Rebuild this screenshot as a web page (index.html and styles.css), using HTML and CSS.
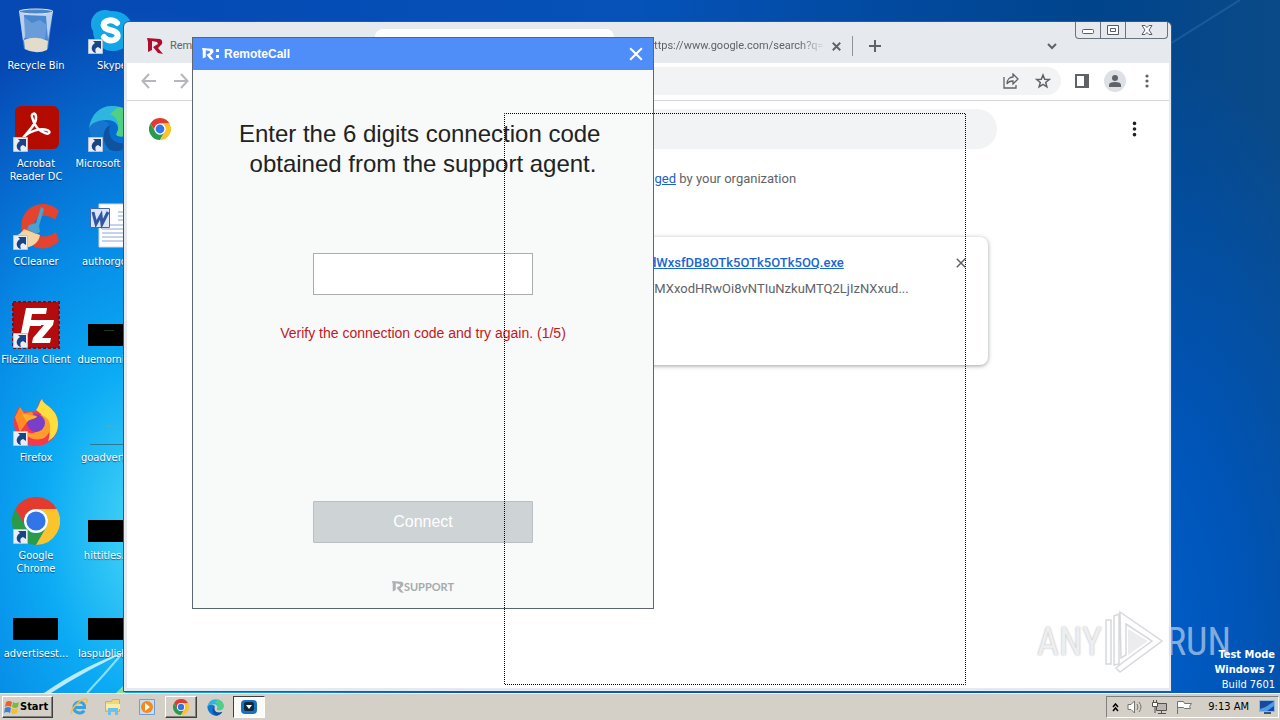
FILE: index.html
```html
<!DOCTYPE html>
<html lang="en">
<head>
<meta charset="utf-8">
<title>RemoteCall</title>
<link rel="stylesheet" href="styles.css">
</head>
<body>
<svg class="defs" aria-hidden="true">
  <symbol id="chrome" viewBox="0 0 48 48">
    <path fill="#e33b2e" d="M24 12H44.8A24 24 0 0 0 3.2 12L13.6 30A12 12 0 0 1 24 12Z"/>
    <path fill="#2a9a4b" d="M34.4 30 24 48A24 24 0 0 1 3.2 12L13.6 30A12 12 0 0 0 34.4 30Z"/>
    <path fill="#fcc42c" d="M24 12H44.8A24 24 0 0 1 24 48L34.4 30A12 12 0 0 0 24 12Z"/>
    <circle cx="24" cy="24" r="12" fill="#fff"/><circle cx="24" cy="24" r="9.6" fill="#3275e8"/>
  </symbol>
  <symbol id="edge" viewBox="0 0 48 48">
    <path fill="#1476cf" d="M1 22C2 39 15 48 27 47c8-1 14-6 16-11-7 5-17 4-22-3-3-5-2-10 1-13C16 13 4 14 1 22Z"/>
    <path fill="#2fb6e0" d="M1 23C3 8 14 0 25 1c13 0 23 9 22 20-1 8-8 12-17 10-3-1-1-3 0-6 1-6-4-10-11-10C10 15 3 18 1 23Z"/>
    <path fill="#4fd083" d="M30 2c11 2 18 10 17 19-1 8-8 12-17 10-3-1-1-3 0-6 2-8-3-14-8-16Z"/>
    <path fill="#0f529e" d="M22 20c-8 4-9 18 0 25 8 4 18-2 21-9-9 5-26 2-21-16Z"/>
  </symbol>
  <symbol id="arrow" viewBox="0 0 15 15">
    <path fill="#e9eef5" stroke="#b4c3d6" d="M.5.5h14v14H.5z"/>
    <path fill="#1b4486" d="M5 2h8v8l-3-2c-3 1-3 3-2 6-5-1-6-7-1-10Z"/>
  </symbol>
  <symbol id="rmark" viewBox="0 0 16 16">
    <path d="M0 0 13 1q3 1 2 5l-4 4 5 6-5-1-5-6 5-3-1-2-5-1v9l-4 2V4Z"/>
  </symbol>
  <symbol id="cross" viewBox="0 0 12 12"><path fill="none" stroke="currentColor" d="m1 1 10 10M11 1 1 11"/></symbol>
  <symbol id="kebab" viewBox="0 0 4 16"><circle cx="2" cy="3" r="1.6"/><circle cx="2" cy="8" r="1.6"/><circle cx="2" cy="13" r="1.6"/></symbol>
</svg>

<main class="desktop">
  <svg class="rays" width="130" height="100" viewBox="0 0 130 100" aria-hidden="true">
    <path fill="#d9f7ff" opacity=".85" d="M44 100Q84 72 130 57 90 75 51 100Z"/>
    <path fill="none" stroke="#a9ecff" stroke-width="2" opacity=".8" d="M87 100Q104 82 120 63"/>
    <path fill="#7fe0a0" d="m116 100 9-9v9z"/>
  </svg>
  <svg class="sheen" width="110" height="60" viewBox="0 0 110 60" aria-hidden="true"><path stroke="#4d86bd" stroke-width="2" opacity=".3" d="M0 44 70 0"/></svg>

  <div class="icons">
    <div class="shortcut">
      <svg viewBox="0 0 48 48"><path fill="#5f9ddd" fill-opacity=".75" d="m7 4 5 38q12 6 24 0l5-38Z"/><path fill="#dfeaf5" fill-opacity=".75" d="m7 4 4 30 3-6-2-20 22 1 2 24 5-29Z"/><path fill="#6d9fd8" fill-opacity=".9" d="m12 10 8 6 8-3 7 5-2 14-20-1Z"/><path fill="#e2ddcb" d="M12 33q12-5 24 1l-1 9q-11 5-22-1Z"/><ellipse cx="24" cy="4.500" rx="17" ry="2.500" fill="#4f86c6" stroke="#dce6ee"/></svg>
      <span>Recycle Bin</span>
    </div>
    <div class="shortcut">
      <svg viewBox="0 0 48 48"><rect x="3" y="3" width="28" height="28" rx="14" fill="#18a6e6"/><circle cx="25" cy="24" r="20" fill="#12a5e8"/><path fill="none" stroke="#fff" stroke-width="6" stroke-linecap="round" d="M29 16q-4-4-10-2c-6 3-3 8 3 9 10 2 9 8 4 10q-6 2-10-3"/><use href="#arrow" y="32" width="15" height="15"/></svg>
      <span>Skype</span>
    </div>
    <div class="shortcut">
      <svg viewBox="0 0 48 48"><rect x="3" y="1" width="44" height="43" rx="6" fill="#b30b00"/><path fill="none" stroke="#fff" stroke-width="2.500" d="M11 33c5-7 14-14 13-21 0-5-5-4-4 0 2 8 7 14 13 16 5 2 6-2 2-3-7-2-18 1-24 8Z"/><use href="#arrow" y="32" width="15" height="15" x="1"/></svg>
      <span>Acrobat Reader DC</span>
    </div>
    <div class="shortcut">
      <svg viewBox="0 0 48 48"><use href="#edge" width="48" height="48"/><use href="#arrow" y="32" width="15" height="15"/></svg>
      <span class="line">Microsoft Edge</span>
    </div>
    <div class="shortcut">
      <svg viewBox="0 0 48 48"><path fill="#e4432f" d="M47 8C36-4 15 0 10 17 5 38 29 56 47 38l-3-9c-12 9-23 3-22-7 1-9 12-13 21-5Z"/><path fill="#f1d5a4" d="m12 26 16 6c-1 8-9 13-17 13L1 33c5 0 8-3 11-7Z"/><path fill="#49a2d2" d="m29 4 3 2-5 17 1 6-4 2-9-5 2-4 7-2Z"/><use href="#arrow" y="32" width="15" height="15" x="1"/></svg>
      <span>CCleaner</span>
    </div>
    <div class="shortcut">
      <svg viewBox="0 0 48 48"><path fill="#fff" stroke="#ccd6e8" d="M11 1h36v43H11z"/><path stroke="#8da5d6" d="M30 9h14M30 13h14M30 17h14M14 22h32M14 26h32M14 30h32M14 34h32M14 38h32"/><path fill="#dce6f8" stroke="#4068b4" d="M2.500 5.500h19v19h-19z"/><path fill="none" stroke="#2f57a6" stroke-width="3" d="m5 9 3 12 5-9 1 9 6-12"/></svg>
      <span>authorgoo...</span>
    </div>
    <div class="shortcut">
      <svg viewBox="0 0 48 48"><path fill="#b40b0f" stroke="#8a0a10" stroke-width="2" stroke-dasharray="3 2" d="M1 1h46v46H1z"/><path fill="#fff" d="M14 7h21l-1 6H20l-1 6h11l-1 6H18l-3 12H8Zm14 12h14l-1 5-11 13h9l-1 5H20l1-5 11-13h-6Z"/><use href="#arrow" y="32" width="15" height="15" x="1"/></svg>
      <span>FileZilla Client</span>
    </div>
    <div class="shortcut"><svg viewBox="0 0 48 48"><path d="M0 23h48v22H0z"/><path stroke="#1e3a12" d="M16 29.500h10"/></svg><span>duemorning...</span></div>
    <div class="shortcut">
      <svg viewBox="0 0 48 48"><path fill="#f6384d" d="M2 23C2 14 6 12 7 7l4 6 12 0c4-6 3-9 6-13 2 6 15 10 17 22 2 15-10 25-22 25S2 38 2 23Z"/><path fill="#ff8b22" d="M3 18 8 8l4 6 8-1 4 7-9 3-7 10Z"/><path fill="#fedd3e" d="M24 11c4-5 3-8 6-11 1 6 15 9 16 23 1 10-5 17-10 19 4-9 1-22-12-31Z"/><path fill="#ff9d2c" d="M27 16c14 1 14 18 5 23-8 4-20-1-20-8 10 8 21 0 15-15Z"/><circle cx="24" cy="24" r="9" fill="#7a3fc9"/><path fill="#ffb02c" d="M10 15c5 0 10 1 15 2-1 4-7 2-10 6Z"/><use href="#arrow" y="32" width="15" height="15" x="1"/></svg>
      <span>Firefox</span>
    </div>
    <div class="shortcut"><svg viewBox="0 0 48 48"><path stroke="#267a98" d="M2 45.500h46"/><path stroke="#3fb2d8" d="M18 27.500h10"/></svg><span>goadvertis...</span></div>
    <div class="shortcut">
      <svg viewBox="0 0 48 48"><use href="#chrome" width="48" height="48"/><use href="#arrow" y="32" width="15" height="15" x="1"/></svg>
      <span>Google Chrome</span>
    </div>
    <div class="shortcut"><svg viewBox="0 0 48 48"><path d="M0 23h48v22H0z"/></svg><span>hittitles.p...</span></div>
    <div class="shortcut"><svg viewBox="0 0 48 48"><path d="M1 23h45v22H1z"/></svg><span>advertisest...</span></div>
    <div class="shortcut"><svg viewBox="0 0 48 48"><path d="M0 23h48v22H0z"/></svg><span>laspublishin...</span></div>
  </div>

  <section class="browser" aria-label="Browser">
    <div class="tabstrip">
      <div class="tab"><svg class="fav" width="16" height="16"><use href="#rmark"/></svg><span>Rem</span></div>
      <div class="tab active"></div>
      <div class="tab last"><span class="fade">https://www.google.com/search?q=</span>
        <button class="plain" aria-label="Close tab"><svg width="9" height="9" stroke-width="2.500"><use href="#cross"/></svg></button></div>
      <button class="plain newtab" aria-label="New tab"><svg width="12" height="12" viewBox="0 0 12 12"><path stroke="currentColor" stroke-width="2" d="M6 0v12M0 6h12"/></svg></button>
      <button class="plain search-tabs" aria-label="Search tabs"><svg width="10" height="7" viewBox="0 0 10 7"><path fill="none" stroke="currentColor" stroke-width="2" d="m1 1 4 4 4-4"/></svg></button>
      <div class="caption">
        <button aria-label="Minimize"><svg class="low" width="12" height="5"><rect x=".5" y=".5" width="11" height="4" rx="1" fill="#fff" stroke="#555d66"/></svg></button>
        <button aria-label="Maximize"><svg width="12" height="10"><path fill="#fff" stroke="#555d66" d="M.5.5h11v9H.5zM3.500 3.500h5v3h-5z"/></svg></button>
        <button class="wide" aria-label="Close"><svg width="12" height="10" viewBox="0 0 12 10"><path fill="#fff" stroke="#555d66" d="M1 .5h3l2 2 2-2h3L8 5l3 4.500H8l-2-2-2 2H1L4 5Z"/></svg></button>
      </div>
    </div>
    <div class="toolbar">
      <button class="plain dim" aria-label="Back"><svg width="16" height="16" viewBox="0 0 16 16"><path fill="none" stroke="currentColor" stroke-width="2" d="M15 8H2M8 1 1.500 8 8 15"/></svg></button>
      <button class="plain dim forward" aria-label="Forward"><svg width="16" height="16" viewBox="0 0 16 16"><path fill="none" stroke="currentColor" stroke-width="2" d="M1 8h13M8 1l6.500 7L8 15"/></svg></button>
      <div class="omnibox">
        <button class="plain" aria-label="Share"><svg width="16" height="16" viewBox="0 0 16 16"><path fill="none" stroke="currentColor" stroke-width="1.300" d="M1 4v11h12v-3M4 11c0-5 3-7 6-7V1l5 5-5 5V8c-3 0-5 1-6 3Z"/></svg></button>
        <button class="plain" aria-label="Bookmark"><svg width="16" height="16" viewBox="0 0 16 16"><path fill="none" stroke="currentColor" stroke-width="1.500" d="m8 2 1.700 4.200 4.500.3-3.500 2.900 1.200 4.400L8 11.400l-3.900 2.400 1.200-4.400-3.500-2.900 4.500-.3Z"/></svg></button>
      </div>
      <button class="plain" aria-label="Side panel"><svg width="14" height="14" viewBox="0 0 14 14"><path fill="none" stroke="currentColor" stroke-width="2" d="M1 1h12v12H1z"/><path fill="currentColor" d="M9 1h4v12H9z"/></svg></button>
      <button class="plain avatar" aria-label="Profile"><svg width="12" height="12" viewBox="0 0 12 12"><circle cx="6" cy="3" r="3"/><path d="M0 12V10q0-3 6-3t6 3v2Z"/></svg></button>
      <button class="plain" aria-label="Menu"><svg width="4" height="16"><use href="#kebab"/></svg></button>
    </div>
    <div class="page">
      <header class="page-head">
        <svg width="22" height="22"><use href="#chrome"/></svg>
        <input class="search" type="search" aria-label="Search downloads">
        <button class="plain dark" aria-label="More actions"><svg width="5" height="18"><use href="#kebab"/></svg></button>
      </header>
      <p class="managed"><a href="#">managed</a> by your organization</p>
      <article class="card">
        <div class="card-text">
          <a class="file" href="#">dWxsfDB8OTk5OTk5OTk5OQ.exe</a>
          <span class="url">/MXxodHRwOi8vNTIuNzkuMTQ2LjIzNXxud...</span>
        </div>
        <button class="plain" aria-label="Remove"><svg width="10" height="10" stroke-width="1.800"><use href="#cross"/></svg></button>
      </article>
    </div>
  </section>

  <form class="dialog">
    <div class="titlebar">
      <svg class="brand" width="17" height="12" viewBox="0 0 17 12"><use href="#rmark" width="12" height="12"/><path d="M14 1h3v3h-3zM14 7h3v3h-3z"/></svg>
      <span>RemoteCall</span>
      <button class="plain close" type="button" aria-label="Close"><svg width="14" height="14" stroke-width="1.800"><use href="#cross"/></svg></button>
    </div>
    <label class="prompt" for="code">Enter the 6 digits connection code <br>obtained from the support agent.</label>
    <input class="code" id="code" type="text">
    <p class="error">Verify the connection code and try again. (1/5)</p>
    <button class="connect" type="button">Connect</button>
    <div class="vendor"><svg width="12" height="12"><use href="#rmark"/></svg><span>SUPPORT</span></div>
  </form>

  <svg class="outline" width="462" height="572" aria-hidden="true"><rect x=".5" y=".5" width="461" height="571"/></svg>

  <div class="watermark">
    <span class="any">ANY</span>
    <svg width="60" height="64" viewBox="0 0 60 64"><path fill="#fff" fill-opacity=".5" stroke="#c6c8cc" stroke-opacity=".7" stroke-width="1.500" d="M2 10h5v44H2zM10 6l5-2v50l-5 1zM16 2 58 31 16 62l-4-4 6-5 30-22-26-17v31l-5 3Z"/><path fill="#e4e4e6" fill-opacity=".7" d="M24 19v26l20-14Z"/></svg>
    <span class="run">RUN</span>
  </div>
  <div class="build"><b>Test Mode</b><b>Windows 7</b><span>Build 7601</span></div>
</main>

<footer class="taskbar">
  <button class="start"><svg width="16" height="16" viewBox="0 0 16 16"><path fill="#e8622c" d="M2 3q3-2 6 0L7 8Q4 6 1 8Z"/><path fill="#7db93a" d="M9 3q3 2 6 0l-1 5q-3 2-6 0Z"/><path fill="#3b82d6" d="M1 9q3-2 6 0l-1 5q-3-2-6 0Z"/><path fill="#f5c02e" d="M8 9q3 2 6 0l-1 5q-3 2-6 0Z"/></svg>Start</button>
  <nav class="quick">
    <button aria-label="Internet Explorer"><svg width="18" height="18" viewBox="0 0 18 18"><path fill="none" stroke="#3aa0e0" stroke-width="3" d="M3 9.500h11.500C15 2 4 2 4 9.500c0 6 8 7 10 3"/><path fill="none" stroke="#f0c040" stroke-width="1.500" d="M2 16C-1 13 9 2 15 1q4 0 1 4"/></svg></button>
    <button aria-label="Explorer"><svg width="18" height="18" viewBox="0 0 18 18"><path fill="#f2d778" stroke="#d2b050" d="M1.500 3.500h6l1-2h7v12h-14z"/><path fill="#f9ecaa" d="M2 6h14v5H2z"/><path fill="#6fc0e8" d="M4 10h10v7h-3v-4H7v4H4z"/></svg></button>
    <button aria-label="Media Player"><svg width="18" height="18" viewBox="0 0 18 18"><path fill="#c8dcf2" stroke="#6c9fd4" d="M1.500 1.500h15v15h-15z"/><circle cx="9" cy="9" r="6" fill="#f58a1c"/><path fill="#fff" d="m7 5 5 4-5 4Z"/></svg></button>
    <button class="raised" aria-label="Google Chrome"><svg width="16" height="16"><use href="#chrome"/></svg></button>
    <button aria-label="Microsoft Edge"><svg width="17" height="17"><use href="#edge"/></svg></button>
    <button class="sunken" aria-label="RemoteCall"><svg width="16" height="14" viewBox="0 0 16 14"><rect width="16" height="14" rx="4" fill="#1873bd"/><rect x="3" y="2" width="10" height="9" rx="2" fill="#12263c"/><path fill="#fff" d="M5 5h6L8 9Z"/></svg></button>
  </nav>
  <div class="tray">
    <svg width="7" height="9" viewBox="0 0 7 9"><path fill="none" stroke="#000" stroke-width="1.500" d="m1 4 2.500-3L6 4M1 8l2.500-3L6 8"/></svg>
    <svg width="16" height="14" viewBox="0 0 16 14"><path fill="#fff" stroke="#77746e" d="M1 4.500h3L7.500 1v12L4 9.500H1Z"/><path fill="none" stroke="#77746e" d="M10 4q2 3 0 6M12 2q4 5 0 10"/></svg>
    <svg width="17" height="16" viewBox="0 0 17 16"><path fill="#bab7b0" stroke="#55534f" d="M5.500 4.500h10v7h-10zM7 14.500h8M10.500 12v2"/><path fill="#fff" stroke="#55534f" d="M1.500 3.500h5v4h-5zM4 8v6M2.500 1v2M5.500 1v2"/></svg>
    <svg width="16" height="14" viewBox="0 0 16 14"><path fill="#fff" stroke="#77746e" d="M1.500 14V1.500h6l1 2h7l-2 3 1 2h-6l-1-1h-6"/></svg>
    <time>9:13 AM</time>
    <svg width="16" height="14" viewBox="0 0 16 14"><path fill="#174a9e" stroke="#8fb8de" d="M.5.500h15v11H.5z"/><path fill="#4f9ae4" d="M1 9q7-2 14-8v5L8 11H1Z"/><path stroke="#33557e" stroke-width="2" d="M5 13h7"/></svg>
  </div>
</footer>
</body>
</html>
```
FILE: styles.css
```css
* { box-sizing: border-box; }
body {
  margin: 0;
  height: 100vh;
  display: flex;
  flex-direction: column;
  overflow: hidden;
  font-family: "Liberation Sans", Arial, sans-serif;
}
button, input { font: inherit; margin: 0; }
svg { display: block; flex: none; }
.defs { position: absolute; width: 0; height: 0; }
.plain { border: 0; background: none; padding: 0; color: #5f6368; fill: currentColor; display: flex; }

.desktop {
  position: relative;
  flex: 1;
  overflow: hidden;
  background:
    radial-gradient(ellipse 330px 520px at 150px 530px, #4ad8f6 0, #0cabf4 32%, #068ae6 58%, transparent 100%),
    radial-gradient(ellipse 300px 600px at 1120px 640px, #0060cc 0, #0055b8 40%, transparent 100%),
    linear-gradient(90deg, #0648b4 0, #0552b8 50%, #00448c 85%, #0a4a88 100%);
}
.rays { position: absolute; left: 0; bottom: 0; }
.sheen { position: absolute; right: 0; top: 0; }

.icons {
  display: grid;
  grid-template-columns: 72px 72px;
  grid-auto-rows: 98px;
  column-gap: 4px;
  padding-top: 7px;
}
.shortcut {
  display: flex;
  flex-direction: column;
  align-items: center;
  gap: 4px;
  color: #fff;
  font: 11px/13px "DejaVu Sans Condensed", sans-serif;
  text-align: center;
  text-shadow: 0 1px 1px rgba(0, 20, 60, .6);
}
.shortcut svg { width: 48px; height: 48px; }
.line { white-space: nowrap; }

.browser {
  position: absolute;
  left: 123px;
  right: 108px;
  top: 21px;
  bottom: 1px;
  display: flex;
  flex-direction: column;
  border: 1px solid #46545f;
  border-radius: 6px 6px 0 0;
  background: #e6e9ed;
  padding: 0 2px 3px 3px;
}
.tabstrip {
  height: 41px;
  display: flex;
  align-items: flex-start;
  padding-left: 9px;
  color: #5f6368;
  font: 11px/16px Roboto, sans-serif;
}
.tab { flex: 0 1 239px; min-width: 0; height: 34px; margin-top: 7px; padding: 0 11px; display: flex; align-items: center; gap: 7px; }
.fav { fill: #b00d2d; }
.active { background: #fff; border-radius: 8px 8px 0 0; }
.last { padding-left: 34px; border-right: 1px solid #8f9398; height: 20px; margin-top: 14px; }
.fade { flex: 1; white-space: nowrap; overflow: hidden; -webkit-mask-image: linear-gradient(90deg, #000 85%, transparent); mask-image: linear-gradient(90deg, #000 85%, transparent); }
.newtab { margin: 18px 0 0 16px; }
.search-tabs { margin: 21px 18px 0 auto; }
.caption { display: flex; margin-right: 1px; border: 1px solid #6b747d; border-top: 0; border-radius: 0 0 4px 4px; }
.caption button { width: 25px; height: 16px; border: 0; border-right: 1px solid #6b747d; background: none; padding: 0; display: grid; place-items: center; }
.caption .wide { width: 41px; border-right: 0; }
.caption .low { margin-top: 3px; }

.toolbar {
  display: flex;
  align-items: center;
  gap: 19px;
  height: 38px;
  padding: 0 20px 2px 14px;
  background: #fff;
  border-bottom: 1px solid #d5d7da;
}
.toolbar .dim { color: #b5b7ba; }
.forward { margin-left: -3px; }
.omnibox {
  flex: 1;
  height: 28px;
  display: flex;
  align-items: center;
  justify-content: flex-end;
  gap: 16px;
  padding-right: 10px;
  margin-left: 38px;
  margin-right: -5px;
  border-radius: 14px;
  background: #f1f3f4;
}
.avatar { width: 22px; height: 22px; border-radius: 50%; background: #dde1e6; align-items: center; justify-content: center; margin-left: -4px; }

.page { flex: 1; background: #fff; font: 13px/20px Roboto, sans-serif; color: #5f6368; }
.page-head { display: flex; align-items: center; height: 56px; padding: 0 32px 0 22px; }
.search { flex: 1; height: 40px; margin: 0 135px 0 146px; border: 0; border-radius: 20px; background: #f1f3f4; }
.dark { color: #202124; }
.managed { margin: 12px 0 48px; padding-left: 122px; text-align: center; }
.managed a { color: #1b62c4; }
.card {
  width: 66%;
  max-width: 680px;
  min-height: 128px;
  margin: 0 auto;
  padding: 16px 22px 16px 341px;
  display: flex;
  justify-content: space-between;
  align-items: flex-start;
  border-radius: 8px;
  box-shadow: 0 1px 4px rgba(60, 64, 67, .5);
}
.card-text { display: flex; flex-direction: column; gap: 6px; white-space: nowrap; }
.file { color: #1967d2; font-weight: 500; }
.card .plain { padding-top: 5px; }

.dialog {
  position: absolute;
  left: 192px;
  top: 37px;
  width: 462px;
  display: flex;
  flex-direction: column;
  align-items: center;
  padding-bottom: 14px;
  border: 1px solid #5c6670;
  background: #f7faf9;
}
.titlebar {
  align-self: stretch;
  height: 32px;
  display: flex;
  align-items: center;
  gap: 5px;
  padding: 0 10px 0 9px;
  background: #4f8ef8;
  color: #fff;
  font-size: 12px;
  font-weight: bold;
}
.brand { fill: #fff; }
.close { margin-left: auto; color: #fff; }
.prompt { margin-top: 49px; font-size: 24px; line-height: 30px; color: #222; text-align: center; white-space: pre; }
.code { width: 220px; height: 42px; margin-top: 74px; border: 1px solid #a9adb0; background: #fff; text-align: center; }
.error { margin: 28px 0 0; font-size: 14px; line-height: 20px; color: #c4161f; }
.connect { width: 220px; height: 42px; margin-top: 158px; border: 1px solid #b9bfc3; border-radius: 1px; background: #ced3d6; color: #fff; font-size: 16px; }
.vendor { display: flex; align-items: center; margin-top: 37px; fill: #adb1b3; color: #a6aaac; font: bold 11px/14px Lato, sans-serif; }

.outline { position: absolute; left: 504px; top: 113px; }
.outline rect { fill: none; stroke: #000; stroke-dasharray: 1 1; stroke-dashoffset: .5; }

.build {
  position: absolute;
  right: 5px;
  bottom: 1px;
  display: flex;
  flex-direction: column;
  align-items: flex-end;
  color: #fff;
  font: 11px/15px "DejaVu Sans Condensed", sans-serif;
}
.watermark {
  position: absolute;
  right: 49px;
  bottom: 19px;
  display: flex;
  align-items: center;
  gap: 2px;
  font: 38px/64px "Liberation Sans Narrow", "Roboto Condensed", Roboto, sans-serif;
}
.any { color: #eeeef0; text-shadow: 0 0 2px #aaa; }
.run { color: rgba(205, 222, 240, .65); }

.taskbar {
  display: flex;
  align-items: center;
  height: 27px;
  padding: 0 1px 0 2px;
  background: #d4d0c8;
  border-top: 1px solid #fff;
  font: 11px/16px "DejaVu Sans Condensed", sans-serif;
}
.start, .raised, .sunken { border: 1px solid; border-color: #fff #404040 #404040 #fff; box-shadow: inset -1px -1px #808080; background: #d4d0c8; }
.start { height: 22px; padding: 0 4px 0 1px; display: flex; align-items: center; font-weight: bold; }
.quick { display: flex; gap: 2px; margin-left: 10px; }
.quick button { width: 32px; height: 22px; padding: 0; display: grid; place-items: center; }
.quick button:not(.raised, .sunken) { border: 0; background: none; }
.quick .sunken { border-color: #404040 #fff #fff #404040; box-shadow: none; background: #fafaf9; }
.tray {
  display: flex;
  align-items: center;
  gap: 8px;
  margin-left: auto;
  height: 22px;
  padding: 0 3px 0 5px;
  border: 1px solid;
  border-color: #808080 #fff #fff #808080;
}
.tray time { margin: 0 2px 0 8px; }
```
